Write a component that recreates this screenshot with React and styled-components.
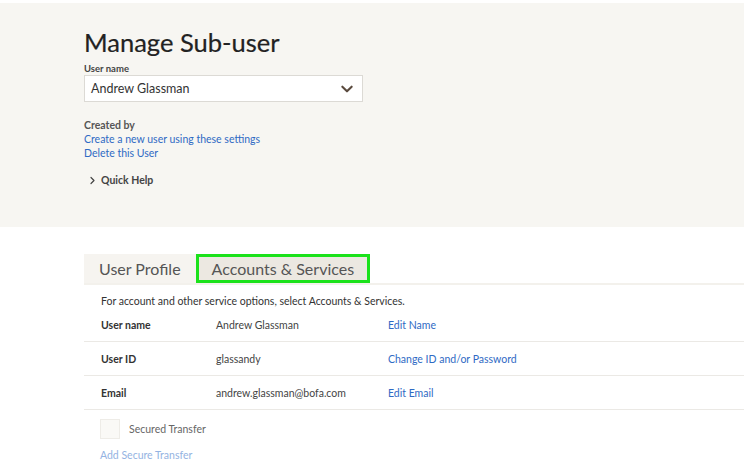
import React from "react";
import styled, { createGlobalStyle } from "styled-components";

const Global = createGlobalStyle`
  html, body { margin: 0; padding: 0; background: #fff; }
  body { font-family: Lato, "Open Sans", sans-serif; color: #333; }
`;

const Page = styled.div`
  width: 744px;
  padding-top: 3px;
`;

const Hero = styled.section`
  background: #f7f6f2;
  height: 224px;
  padding: 24px 0 0 84px;
  box-sizing: border-box;
`;

const Title = styled.h1`
  margin: 0;
  font-size: 25.5px;
  font-weight: 400;
  color: #222;
  line-height: 30px;
  -webkit-text-stroke: 0.2px #222;
`;

const FieldLabel = styled.div`
  margin-top: 6px;
  font-size: 9.5px;
  font-weight: 700;
  color: #444;
  line-height: 12px;
`;

const Select = styled.div`
  margin-top: 0;
  width: 279px;
  height: 27px;
  box-sizing: border-box;
  background: #fff;
  border: 1px solid #dcdad5;
  display: flex;
  align-items: center;
  justify-content: space-between;
  padding: 0 8px 0 6px;
  font-size: 12.5px;
  color: #333;
`;

const Block = styled.div`
  margin-top: 16px;
  display: flex;
  flex-direction: column;
  font-size: 10.5px;
  line-height: 14px;
`;

const Strong = styled.span`
  font-weight: 700;
  color: #555;
`;

const Link = styled.a`
  color: ${(p) => (p.$faded ? "#94b3e2" : "#2f6ac4")};
  text-decoration: none;
  font-size: 10.5px;
`;

const Help = styled.div`
  margin-top: 14px;
  display: flex;
  align-items: center;
  gap: 4px;
  padding-left: 4px;
  font-size: 10.5px;
  font-weight: 700;
  color: #444;
`;

const Body = styled.section`
  padding: 27px 0 0 84px;
`;

const Tabs = styled.div`
  display: flex;
  align-items: flex-end;
  border-bottom: 2px solid #f3f1ec;
`;

const Tab = styled.div`
  height: 29px;
  box-sizing: border-box;
  display: flex;
  align-items: center;
  padding: 0 ${(p) => (p.$active ? "13px" : "15px")};
  font-size: 16px;
  color: #555;
  background: ${(p) => (p.$active ? "#ece8e1" : "#f6f4f0")};
  border: ${(p) => (p.$active ? "3px solid #1be21b" : "none")};
`;

const Intro = styled.p`
  margin: 9px 0 0 17px;
  font-size: 10.5px;
  color: #333;
  line-height: 14px;
`;

const Row = styled.div`
  display: grid;
  grid-template-columns: 115px 172px 1fr;
  align-items: center;
  height: 34px;
  box-sizing: border-box;
  padding-left: 17px;
  border-bottom: 1px solid #ebe9e5;
  font-size: 10.5px;
`;

const Label = styled.span`
  font-weight: 700;
  color: #333;
`;

const Value = styled.span`
  color: #444;
`;

const Check = styled.div`
  display: flex;
  align-items: center;
  gap: 9px;
  padding: 9px 0 0 16px;
  font-size: 10.5px;
  color: #666;
`;

const Box = styled.span`
  width: 20px;
  height: 20px;
  box-sizing: border-box;
  border: 1px solid #eeece7;
  background: #faf9f6;
`;

const AddRow = styled.div`
  padding: 4px 0 0 16px;
`;

const Chevron = ({ dir = "down", size = 12, color = "#555" }) => (
  <svg width={size} height={size} viewBox="0 0 12 12">
    {dir === "down" ? (
      <path d="M2 4 L6 8 L10 4" fill="none" stroke={color} strokeWidth="1.8" strokeLinecap="round" strokeLinejoin="round" />
    ) : (
      <path d="M4 2 L8 6 L4 10" fill="none" stroke={color} strokeWidth="1.6" strokeLinecap="round" strokeLinejoin="round" />
    )}
  </svg>
);

export default function App() {
  return (
    <Page>
      <Global />
      <Hero>
        <Title>Manage Sub-user</Title>
        <FieldLabel>User name</FieldLabel>
        <Select>
          <span>Andrew Glassman</span>
          <Chevron dir="down" size={14} color="#5a4a3e" />
        </Select>
        <Block>
          <Strong>Created by</Strong>
          <Link href="#">Create a new user using these settings</Link>
          <Link href="#">Delete this User</Link>
        </Block>
        <Help>
          <Chevron dir="right" size={9} color="#444" />
          <span>Quick Help</span>
        </Help>
      </Hero>
      <Body>
        <Tabs>
          <Tab>User Profile</Tab>
          <Tab $active>Accounts &amp; Services</Tab>
        </Tabs>
        <Intro>For account and other service options, select Accounts &amp; Services.</Intro>
        <Row>
          <Label>User name</Label>
          <Value>Andrew Glassman</Value>
          <Link href="#">Edit Name</Link>
        </Row>
        <Row>
          <Label>User ID</Label>
          <Value>glassandy</Value>
          <Link href="#">Change ID and/or Password</Link>
        </Row>
        <Row>
          <Label>Email</Label>
          <Value>andrew.glassman@bofa.com</Value>
          <Link href="#">Edit Email</Link>
        </Row>
        <Check>
          <Box />
          <span>Secured Transfer</span>
        </Check>
        <AddRow>
          <Link href="#" $faded>Add Secure Transfer</Link>
        </AddRow>
      </Body>
    </Page>
  );
}
